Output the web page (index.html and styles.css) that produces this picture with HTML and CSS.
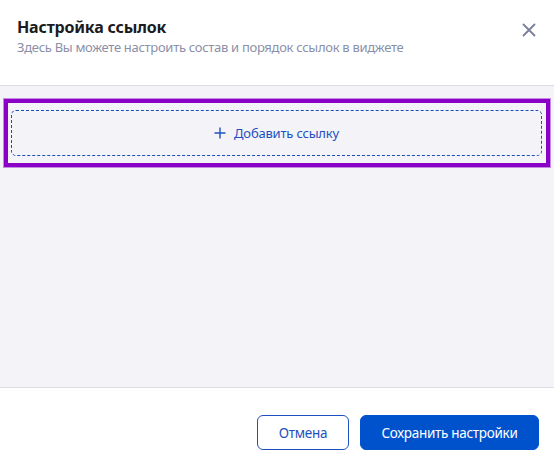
FILE: index.html
```
<!DOCTYPE html>
<html lang="ru">
<head>
    <meta charset="UTF-8">
    <title>Настройка ссылок</title>
    <link rel="stylesheet" href="styles.css">
</head>
<body>
    <div class="modal">
        <div class="modal-header">
            <div>
                <h1 class="title">Настройка ссылок</h1>
                <p class="subtitle">Здесь Вы можете настроить состав и порядок ссылок в виджете</p>
            </div>
            <button class="close" type="button">
                <svg width="14" height="14" viewBox="0 0 14 14"><path d="M1.5 1.5l11 11M12.5 1.5l-11 11" stroke="#7a7f99" stroke-width="1.8" stroke-linecap="round"/></svg>
            </button>
        </div>
        <div class="modal-body">
            <div class="selected">
                <button class="add-link" type="button">
                    <svg width="12" height="12" viewBox="0 0 12 12"><path d="M6 0.5v11M0.5 6h11" stroke="#1e50c2" stroke-width="1.4"/></svg>
                    <span>Добавить ссылку</span>
                </button>
            </div>
        </div>
        <div class="modal-footer">
            <button class="btn btn-outline" type="button">Отмена</button>
            <button class="btn btn-primary" type="button">Сохранить настройки</button>
        </div>
    </div>
</body>
</html>
```
FILE: styles.css
```
body{
    margin: 0;
    font-family: "Noto Sans", Roboto, sans-serif;
    background-color: #fff;
}
.modal{
    width: 554px;
    height: 460px;
    display: flex;
    flex-direction: column;
}
.modal-header{
    height: 86px;
    box-sizing: border-box;
    padding: 16px 18px 0 17px;
    display: flex;
    justify-content: space-between;
    align-items: flex-start;
    border-bottom: 1px solid #dcdce4;
}
.title{
    margin: 0;
    font-size: 16px;
    font-weight: 700;
    color: #1b1b22;
    line-height: 22px;
    letter-spacing: -0.2px;
}
.subtitle{
    margin: 0;
    font-size: 13px;
    color: #8b90a8;
    line-height: 18px;
    letter-spacing: -0.3px;
}
.close{
    border: none;
    background: none;
    padding: 0;
    margin-top: 7px;
    cursor: pointer;
}
.modal-body{
    flex: 1;
    background-color: #f4f4f8;
    padding: 13px 4px 0 4px;
}
.selected{
    border: 4px solid #8a00c6;
    box-shadow: 0 0 0 1px #c48be0;
    padding: 7px 4px 7px 3px;
}
.add-link{
    width: 100%;
    height: 46px;
    border: 1px dashed #1a4db8;
    border-radius: 5px;
    background: none;
    display: flex;
    justify-content: center;
    align-items: center;
    gap: 8px;
    color: #1e50c2;
    font-family: inherit;
    font-size: 13px;
    letter-spacing: -0.2px;
    cursor: pointer;
}
.modal-footer{
    height: 73px;
    box-sizing: border-box;
    border-top: 1px solid #dcdce4;
    padding: 27px 15px 0 0;
    display: flex;
    justify-content: flex-end;
    align-items: flex-start;
    gap: 11px;
}
.btn{
    height: 35px;
    border-radius: 6px;
    font-family: inherit;
    font-size: 13.5px;
    letter-spacing: -0.3px;
    cursor: pointer;
}
.btn-outline{
    width: 92px;
    background-color: #fff;
    border: 1px solid #1e50c2;
    color: #1e50c2;
}
.btn-primary{
    width: 179px;
    background-color: #0052cc;
    border: 1px solid #0052cc;
    color: #fff;
}
```
